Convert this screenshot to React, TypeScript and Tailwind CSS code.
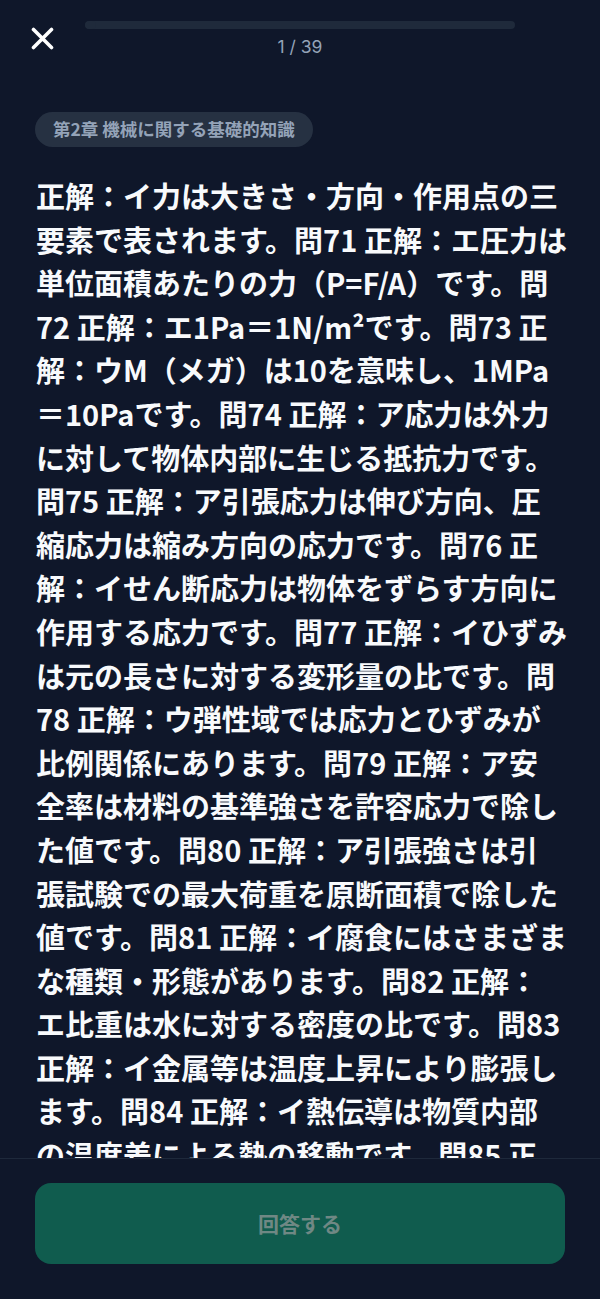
const lines = [
  "正解：イ力は大きさ・方向・作用点の三",
  "要素で表されます。問71 正解：エ圧力は",
  "単位面積あたりの力（P=F/A）です。問",
  "72 正解：エ1Pa＝1N/m²です。問73 正",
  "解：ウM（メガ）は10を意味し、1MPa",
  "＝10Paです。問74 正解：ア応力は外力",
  "に対して物体内部に生じる抵抗力です。",
  "問75 正解：ア引張応力は伸び方向、圧",
  "縮応力は縮み方向の応力です。問76 正",
  "解：イせん断応力は物体をずらす方向に",
  "作用する応力です。問77 正解：イひずみ",
  "は元の長さに対する変形量の比です。問",
  "78 正解：ウ弾性域では応力とひずみが",
  "比例関係にあります。問79 正解：ア安",
  "全率は材料の基準強さを許容応力で除し",
  "た値です。問80 正解：ア引張強さは引",
  "張試験での最大荷重を原断面積で除した",
  "値です。問81 正解：イ腐食にはさまざま",
  "な種類・形態があります。問82 正解：",
  "エ比重は水に対する密度の比です。問83",
  "正解：イ金属等は温度上昇により膨張し",
  "ます。問84 正解：イ熱伝導は物質内部",
  "の温度差による熱の移動です。問85 正",
  "解：ア熱は高温側から低温側へ移動しま",
  "す。",
];

const total = 39;
const current = 1;

export default function App() {
  return (
    <div
      className="flex h-screen flex-col overflow-hidden bg-[#0f172a] text-white"
      style={{ fontFamily: '"Noto Sans CJK JP", "Noto Sans", sans-serif' }}
    >
      {/* Header */}
      <header className="grid shrink-0 grid-cols-[85px_1fr_85px] pt-[21px]">
        <div className="pl-[31px] pt-[6px]">
          <button className="flex h-[23px] w-[23px] items-center justify-center text-white">
            <svg width="23" height="23" viewBox="0 0 23 23" fill="none">
              <path d="M2.5 2.5L20.5 20.5M20.5 2.5L2.5 20.5" stroke="currentColor" strokeWidth="3.6" strokeLinecap="round" />
            </svg>
          </button>
        </div>
        <div className="flex flex-col items-center">
          <div className="h-2 w-full overflow-hidden rounded-full bg-[#1f2a3b]">
            <div className="h-full rounded-full bg-[#1f2a3b]" style={{ width: `${(current / total) * 100}%` }} />
          </div>
          <p
            className="mt-[6px] text-[17.5px] leading-6 text-[#94a3b8]"
            style={{ fontFamily: 'Inter, "Noto Sans", sans-serif' }}
          >
            {current} / {total}
          </p>
        </div>
        <div />
      </header>

      {/* Question */}
      <main className="flex-1 overflow-hidden px-[35px]">
        <div className="mt-[53px] inline-flex h-[35px] items-center rounded-full bg-[#263142] px-[18px]">
          <span className="text-[17.5px] font-bold text-[#94a3b8]">第2章 機械に関する基礎的知識</span>
        </div>
        <p className="mt-[27px] whitespace-nowrap pl-[1px] text-[29px] font-bold leading-[43.6px] text-[#f8fafc]">
          {lines.map((l, i) => (
            <span key={i}>
              {l}
              <br />
            </span>
          ))}
        </p>
      </main>

      {/* Footer */}
      <footer className="shrink-0 border-t border-[#1e293b] px-[35px] pb-[35px] pt-[24px]">
        <button
          disabled
          className="flex h-[81px] w-full items-center justify-center rounded-2xl bg-[#105c4e] text-[21px] font-bold text-[#6f8884]"
        >
          回答する
        </button>
      </footer>
    </div>
  );
}
